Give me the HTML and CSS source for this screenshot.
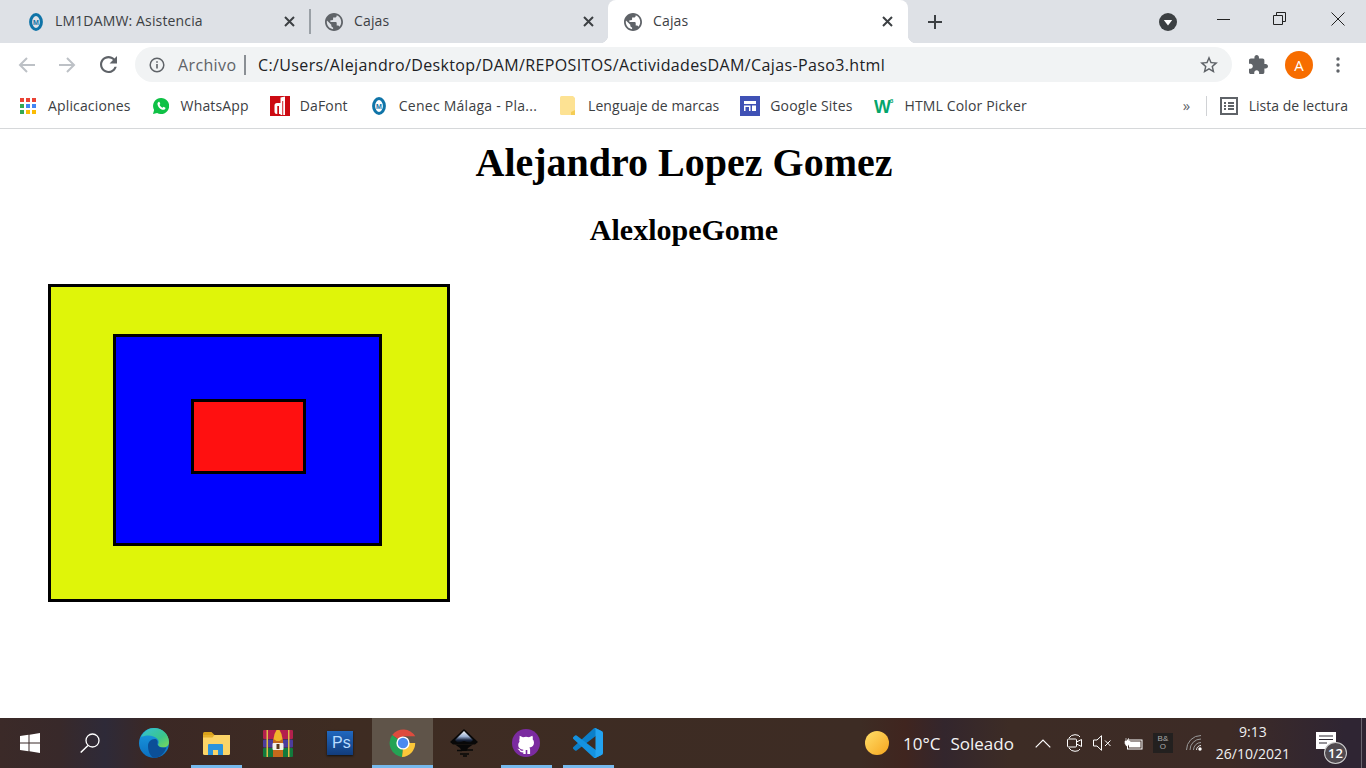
FILE: index.html
```html
<!DOCTYPE html>
<html lang="es">
<head>
  <meta charset="UTF-8">
  <title>Cajas</title>
  <link rel="stylesheet" href="styles.css">
</head>
<body>
  <svg class="defs" width="0" height="0">
    <symbol id="globe" viewBox="2 2 20 20"><path d="M12 2C6.48 2 2 6.48 2 12s4.48 10 10 10 10-4.48 10-10S17.52 2 12 2zm-1 17.93c-3.95-.49-7-3.85-7-7.93 0-.62.08-1.21.21-1.79L9 15v1c0 1.1.9 2 2 2v1.93zm6.9-2.54c-.26-.81-1-1.39-1.9-1.39h-1v-3c0-.55-.45-1-1-1H8v-2h2c.55 0 1-.45 1-1V7h2c1.1 0 2-.9 2-2v-.41c2.93 1.19 5 4.06 5 7.41 0 2.08-.8 3.97-2.1 5.39z"/></symbol>
    <symbol id="cross" viewBox="0 0 11 11"><path d="M1 1l9 9M10 1l-9 9" fill="none" stroke="currentColor" stroke-width="2"/></symbol>
  </svg>

  <header class="chrome">
    <div class="tabstrip">
      <div class="tab tab-first">
        <svg class="favicon narrow" viewBox="0 0 14 18"><ellipse cx="7" cy="9" rx="5.4" ry="7.4" fill="none" stroke="#0f74a8" stroke-width="3"/><text x="7" y="11.500" text-anchor="middle" font-size="7" font-weight="700" fill="#0f74a8" font-family="Liberation Sans, sans-serif">M</text></svg>
        <span class="tab-title">LM1DAMW: Asistencia</span>
        <svg class="tab-close"><use href="#cross"/></svg>
      </div>
      <span class="tab-sep"></span>
      <div class="tab tab-second">
        <svg class="favicon globe"><use href="#globe"/></svg>
        <span class="tab-title">Cajas</span>
        <svg class="tab-close"><use href="#cross"/></svg>
      </div>
      <div class="tab tab-active">
        <svg class="favicon globe"><use href="#globe"/></svg>
        <span class="tab-title">Cajas</span>
        <svg class="tab-close"><use href="#cross"/></svg>
      </div>
      <svg class="new-tab" viewBox="0 0 16 16"><path d="M8 1v14M1 8h14" fill="none" stroke="#3c4043" stroke-width="2"/></svg>
      <svg class="tab-search" viewBox="0 0 18 18"><circle cx="9" cy="9" r="9" fill="#3c4043"/><path d="M4.8 7h8.4L9 12.6z" fill="#fff"/></svg>
      <div class="window-btns">
        <svg viewBox="0 0 14 14"><path d="M0 7.5h13" stroke="#222" fill="none"/></svg>
        <svg viewBox="0 0 14 14"><path d="M.5 3.5h9v9h-9zM3.5 3.5v-3h9v9h-3" stroke="#222" fill="none"/></svg>
        <svg viewBox="0 0 14 14"><path d="M.5.5l13 13M13.5.5l-13 13" stroke="#222" fill="none"/></svg>
      </div>
    </div>

    <div class="toolbar">
      <svg class="nav-icon" viewBox="0 0 18 18"><path d="M17 9H2M9 2L2 9l7 7" fill="none" stroke="#bdc1c6" stroke-width="2"/></svg>
      <svg class="nav-icon forward" viewBox="0 0 18 18"><path d="M1 9h15M9 2l7 7-7 7" fill="none" stroke="#bdc1c6" stroke-width="2"/></svg>
      <svg class="nav-icon reload" viewBox="4 4 16 16"><path d="M17.65 6.35C16.2 4.9 14.21 4 12 4c-4.42 0-7.99 3.58-7.99 8s3.57 8 7.99 8c3.73 0 6.84-2.55 7.73-6h-2.08c-.82 2.33-3.04 4-5.65 4-3.31 0-6-2.69-6-6s2.69-6 6-6c1.66 0 3.14.69 4.22 1.78L13 11h7V4l-2.35 2.35z" fill="#5f6368"/></svg>
      <div class="omnibox">
        <svg class="info" viewBox="0 0 16 16"><circle cx="8" cy="8" r="6.8" fill="none" stroke="#5f6368" stroke-width="1.5"/><path d="M7.2 7h1.6v4.6H7.2zM7.2 4.2h1.6v1.6H7.2z" fill="#5f6368"/></svg>
        <span class="scheme">Archivo</span>
        <span class="omni-sep"></span>
        <span class="url">C:/Users/Alejandro/Desktop/DAM/REPOSITOS/ActividadesDAM/Cajas-Paso3.html</span>
        <svg class="star" viewBox="2 2 20 19"><path d="M22 9.24l-7.19-.62L12 2 9.19 8.63 2 9.24l5.46 4.73L5.82 21 12 17.27 18.18 21l-1.63-7.03L22 9.24zM12 15.4l-3.76 2.27 1-4.28-3.32-2.88 4.38-.38L12 6.1l1.71 4.04 4.38.38-3.32 2.88 1 4.28L12 15.4z" fill="#5f6368"/></svg>
      </div>
      <svg class="puzzle" viewBox="2 1 21 21"><path d="M20.5 11H19V7c0-1.1-.9-2-2-2h-4V3.5C13 2.12 11.88 1 10.5 1S8 2.12 8 3.5V5H4c-1.1 0-1.99.9-1.99 2v3.8H3.5c1.49 0 2.7 1.21 2.7 2.7s-1.21 2.7-2.7 2.7H2V20c0 1.1.9 2 2 2h3.8v-1.5c0-1.49 1.21-2.7 2.7-2.7 1.49 0 2.7 1.21 2.7 2.7V22H17c1.1 0 2-.9 2-2v-4h1.5c1.38 0 2.5-1.12 2.5-2.5S21.88 11 20.5 11z" fill="#5f6368"/></svg>
      <span class="avatar">A</span>
      <svg class="kebab" viewBox="0 0 4 16"><circle cx="2" cy="2" r="1.7"/><circle cx="2" cy="8" r="1.7"/><circle cx="2" cy="14" r="1.7"/></svg>
    </div>

    <div class="bookmarks">
      <a class="bm bm-apps">
        <svg class="bm-icon" viewBox="0 0 16 16">
          <rect x="0" y="0" width="4" height="4" fill="#ea4335"/><rect x="6" y="0" width="4" height="4" fill="#ea4335"/><rect x="12" y="0" width="4" height="4" fill="#ea4335"/>
          <rect x="0" y="6" width="4" height="4" fill="#34a853"/><rect x="6" y="6" width="4" height="4" fill="#4285f4"/><rect x="12" y="6" width="4" height="4" fill="#4285f4"/>
          <rect x="0" y="12" width="4" height="4" fill="#34a853"/><rect x="6" y="12" width="4" height="4" fill="#fbbc05"/><rect x="12" y="12" width="4" height="4" fill="#fbbc05"/>
        </svg>
        <span>Aplicaciones</span>
      </a>
      <a class="bm bm-whatsapp">
        <svg class="bm-icon" viewBox="0 0 16 16"><path d="M8 0a8 8 0 0 0-6.9 12L0 16l4.1-1.1A8 8 0 1 0 8 0z" fill="#0fc146"/><path d="M5.6 3.9c-.7.4-1.3 1.200-1.100 2.300.4 2.700 3 5.300 5.600 5.600 1.100.1 2-.5 2.300-1.300.1-.4.100-.7 0-.8l-1.900-.9-.9 1c-1.400-.5-2.500-1.600-3.100-3l.8-.9-.8-1.900c-.2-.2-.6-.2-.9-.1z" fill="#fff"/></svg>
        <span>WhatsApp</span>
      </a>
      <a class="bm bm-dafont">
        <svg class="bm-icon wide" viewBox="0 0 20 20"><rect width="20" height="20" fill="#cc0a12"/><path d="M4.500 9.500Q4.500 7 7 7h3.500V1.500l4.500-1V19h-4.500v-1H7q-2.500 0-2.500-2.500z" fill="#fff"/><path d="M7.300 10h1.700v8H7.300zM12.300 5h.9v14h-.9z" fill="#cc0a12"/></svg>
        <span>DaFont</span>
      </a>
      <a class="bm bm-cenec">
        <svg class="bm-icon narrow" viewBox="0 0 14 18"><ellipse cx="7" cy="9" rx="5.4" ry="7.4" fill="none" stroke="#0f74a8" stroke-width="3"/><text x="7" y="11.500" text-anchor="middle" font-size="7" font-weight="700" fill="#0f74a8" font-family="Liberation Sans, sans-serif">M</text></svg>
        <span>Cenec Málaga - Pla...</span>
      </a>
      <a class="bm bm-folder">
        <svg class="bm-icon" viewBox="0 0 16 20"><path d="M0 1.500Q0 0 1.500 0h11.500l2 2v14l-1.500 3H1.500Q0 19 0 17.500z" fill="#fde293"/><path d="M15 14v5h-4v-3z" fill="#f5cd55"/></svg>
        <span>Lenguaje de marcas</span>
      </a>
      <a class="bm bm-sites">
        <svg class="bm-icon wide" viewBox="0 0 20 20"><rect width="20" height="20" fill="#3f51b5"/><path d="M4 5h12v3H4zM4 9.500h6.500V15H4zM12 9.500h4V15h-4z" fill="#fff"/><path d="M5.500 11h3.500v4H5.500z" fill="#3f51b5"/></svg>
        <span>Google Sites</span>
      </a>
      <a class="bm bm-w3">
        <svg class="bm-icon wide" viewBox="0 0 20 20"><text x="0" y="17" font-size="19" font-weight="700" fill="#04a56b" font-family="Liberation Sans, sans-serif" textLength="17" lengthAdjust="spacingAndGlyphs">W</text><text x="16" y="7" font-size="6" font-weight="700" fill="#04a56b" font-family="Liberation Sans, sans-serif">3</text></svg>
        <span>HTML Color Picker</span>
      </a>
      <span class="bm-more">»</span>
      <span class="bm-sep"></span>
      <a class="bm bm-reading">
        <svg class="bm-icon" viewBox="0 0 18 18"><rect x="1" y="1" width="16" height="16" fill="none" stroke="#5f6368" stroke-width="2"/><path d="M4 5h2v2H4zM8 5h6v2H8zM4 8h2v2H4zM8 8h6v2H8zM4 11h2v2H4zM8 11h6v2H8z" fill="#5f6368"/></svg>
        <span>Lista de lectura</span>
      </a>
    </div>
  </header>

  <main class="page">
    <h1>Alejandro Lopez Gomez</h1>
    <h2>AlexlopeGome</h2>
    <div class="caja-amarilla">
      <div class="caja-azul">
        <div class="caja-roja"></div>
      </div>
    </div>
  </main>

  <footer class="taskbar">
    <svg class="start" viewBox="0 0 20 20"><path d="M0 3l8.500-1.200v7.700H0zM9.500 1.700L20 0v9.500H9.500zM0 10.500h8.500v7.700L0 17zM9.500 10.500H20V20L9.500 18.300z" fill="#fff"/></svg>
    <svg class="search" viewBox="0 0 20 20"><circle cx="12.500" cy="7.500" r="6.500" fill="none" stroke="#fff" stroke-width="1.300"/><path d="M8 12.500L.7 19.500" stroke="#fff" stroke-width="1.500"/></svg>

    <div class="apps">
      <div class="app">
        <svg class="app-icon" viewBox="0 0 30 30">
          <defs>
            <linearGradient id="edgeA" x1="0" y1="0" x2="1" y2="1"><stop offset="0" stop-color="#35c1d8"/><stop offset=".6" stop-color="#3bc58a"/><stop offset="1" stop-color="#7ed957"/></linearGradient>
            <linearGradient id="edgeB" x1="0" y1="0" x2="0" y2="1"><stop offset="0" stop-color="#1b9de2"/><stop offset="1" stop-color="#0c6fc0"/></linearGradient>
          </defs>
          <circle cx="15" cy="15" r="15" fill="url(#edgeB)"/>
          <path d="M2 9C5 3 10 0 15 0c8 0 15 6 15 14 0 3-2 5.500-6 5.500-2.500 0-5-1-5-3 1.200-1.500.8-4-.5-5.500C16 8.500 12 7 8 7.500 5.500 7.800 3.500 8.500 2 9z" fill="url(#edgeA)"/>
          <path d="M9 18c0-4 3-7 6.500-7 2.500 0 3.800 2 3 4.500-.3 2.500 2.500 4 5.500 4h3.500C25 26 20 30 15 30 12 29 9 24 9 18z" fill="#0b4f97"/>
        </svg>
      </div>
      <div class="app app-open">
        <svg class="explorer-icon" viewBox="0 0 27 23"><path d="M0 1.500Q0 0 1.500 0h7l3 3 -1 2H0z" fill="#d9a21b"/><path d="M0 3h27v18.500q0 1.500-1.500 1.500h-24Q0 23 0 21.500z" fill="#fbd467"/><path d="M0 3h11.500l-2 2.500H0z" fill="#e5b02c"/><path d="M5 23V13q0-1 1-1h13q1 0 1 1v10h-5v-5h-5v5z" fill="#2b93dc"/></svg>
      </div>
      <div class="app">
        <svg class="rar-icon" viewBox="0 0 30 27">
          <rect y="0" width="30" height="9" rx="1" fill="#b3204d"/><rect y="9.500" width="30" height="8" rx="1" fill="#4c3c9c"/><rect y="18" width="30" height="9" rx="1" fill="#127a3c"/>
          <path d="M3.500 0h1.500v27H3.500zM25 0h1.500v27H25z" fill="#e0bc48"/>
          <rect x="10" y="9" width="10" height="18" fill="#c4691c"/>
          <path d="M11.500 4l2-4h3l2 4 1 5-3 2h-3l-3-2z" fill="#f0b52a"/>
          <rect x="9.500" y="13" width="11" height="7" rx="1" fill="#f4f1e8"/>
          <rect x="13.500" y="14" width="3" height="5" fill="#5a3a1a"/>
        </svg>
      </div>
      <div class="app">
        <div class="ps-icon">Ps</div>
      </div>
      <div class="app app-open app-active">
        <svg class="app-icon-sm" viewBox="0 0 28 28"><path d="M14 14L3.200 6A14 14 0 0 1 26.200 7.200H14z" fill="#dd4b3e"/><path d="M14 14H26.200A14 14 0 0 1 13 28z" fill="#fbc739"/><path d="M14 14L13 28A14 14 0 0 1 3.200 6z" fill="#24a354"/><circle cx="14" cy="14" r="6.600" fill="#fff"/><circle cx="14" cy="14" r="5.200" fill="#4a89ee"/></svg>
      </div>
      <div class="app">
        <svg class="app-icon-sm" viewBox="0 0 28 28">
          <defs><linearGradient id="inkBody" x1="0" y1="0" x2="0" y2="1"><stop offset="0" stop-color="#f4f4f4"/><stop offset=".45" stop-color="#9fb4d6"/><stop offset=".75" stop-color="#1d2a44"/><stop offset="1" stop-color="#050505"/></linearGradient></defs>
          <path d="M14 0L28 13l-3 2.500H3L0 13z" fill="#080808"/>
          <path d="M14 2l9 9-3 3-6-2-6 2-3-3z" fill="url(#inkBody)"/>
          <path d="M5 15.500h18l-5 3.500-1.500 3h-5L10 19z" fill="#080808"/>
          <path d="M7 21.500h5M16 21h7M10 25h9M13 27h4" stroke="#080808" stroke-width="1.300"/>
        </svg>
      </div>
      <div class="app app-open">
        <svg class="app-icon-sm" viewBox="0 0 28 28"><circle cx="14" cy="14" r="14" fill="#7b2ba0"/><path d="M7.600 6.800l3.400 1.400q3-.7 6 0l3.400-1.400q.8 2 .3 3.500 1.300 1.500 1.300 3.400 0 4-4.600 4.700.7.800.7 2v4.500h-2.800v-3.800h-1.600v3.800h-2.400v-1.600q-3.300.6-4.300-2.300l-1.700-1.300 2.300.4 1.200 1.400q1.100.6 2.500.1v-.9q-5-.5-5.100-4.800 0-1.900 1.300-3.200-.6-1.500.1-3.500z" fill="#fff"/></svg>
      </div>
      <div class="app app-open">
        <svg class="app-icon" viewBox="0 0 100 100"><path d="M96.460 10.800L75.860.870a6.230 6.230 0 0 0-7.100 1.200L1.300 63.600a4.160 4.160 0 0 0 0 6.160l5.500 5a4.170 4.170 0 0 0 5.330.24L93.400 13.300c2.730-2.070 6.600-.13 6.600 3.300v-.24c0-2.400-1.380-4.600-3.540-5.560z" fill="#0b7fc9"/><path d="M96.460 89.200L75.860 99.130a6.230 6.230 0 0 1-7.100-1.200L1.300 36.400a4.160 4.160 0 0 1 0-6.160l5.500-5a4.170 4.170 0 0 1 5.330-.24L93.400 86.700c2.730 2.070 6.600.13 6.600-3.300v.24c0 2.400-1.380 4.600-3.540 5.560z" fill="#1492e0"/><path d="M75.860 99.130a6.230 6.230 0 0 1-7.100-1.200c2.300 2.300 6.240.67 6.240-2.600V4.670c0-3.270-3.940-4.900-6.240-2.600a6.230 6.230 0 0 1 7.100-1.200L96.460 10.800A6.250 6.250 0 0 1 100 16.440v67.120a6.250 6.250 0 0 1-3.540 5.640z" fill="#23a3f0"/></svg>
      </div>
    </div>

    <div class="weather">
      <span class="sun"></span>
      <span class="temp">10°C</span>
      <span class="sky">Soleado</span>
    </div>

    <div class="tray">
      <svg class="tray-chevron" viewBox="0 0 16 9"><path d="M.7 8.300L8 1l7.300 7.300" fill="none" stroke="#fff" stroke-width="1.200"/></svg>
      <svg class="tray-meet" viewBox="0 0 15 18"><path d="M2 4Q4 .7 8 .7T13 3M2 14Q4 17.300 8 17.300T13 15" fill="none" stroke="#fff"/><rect x=".5" y="5" width="9" height="8" rx="1" fill="none" stroke="#fff"/><path d="M9.500 8l5-2.500v7l-5-2.500" fill="none" stroke="#fff"/></svg>
      <svg class="tray-volume" viewBox="0 0 19 16"><path d="M.5 5h3.500L8.500.7v14.600L4 11H.5z" fill="none" stroke="#fff"/><path d="M12 5.500l5.500 5.500M17.500 5.500L12 11" fill="none" stroke="#fff"/></svg>
      <svg class="tray-battery" viewBox="0 0 20 13"><path d="M3 1v3M5.500 1v3M2 4h5v2.500L4.500 9H3.500L2 6.500z" fill="#fff" stroke="#fff" stroke-width=".6"/><rect x="4.500" y="3" width="14.500" height="9" fill="none" stroke="#fff"/><rect x="6" y="4.500" width="11.500" height="6" fill="#fff"/></svg>
      <div class="tray-bo">B&amp;<br>O</div>
      <svg class="tray-wifi" viewBox="0 0 16 16"><path d="M.5 15A14.500 14.500 0 0 1 15 .5M4 15A11 11 0 0 1 15 4M7.500 15A7.500 7.500 0 0 1 15 7.500" fill="none" stroke="#9a9a9a"/><path d="M10.500 15A4.500 4.500 0 0 1 15 10.500" fill="none" stroke="#ddd"/><circle cx="14" cy="14" r="1.700" fill="#fff"/></svg>
      <div class="clock"><span>9:13</span><span>26/10/2021</span></div>
      <div class="notif">
        <svg class="notif-icon" viewBox="0 0 20 17"><path d="M0 0h20v17H0z" fill="#fff"/><path d="M3 4h14M3 7.500h14M3 11h8" stroke="#2d2833" stroke-width="1.200"/></svg>
        <span class="notif-badge">12</span>
      </div>
    </div>
    <span class="show-desktop"></span>
  </footer>
</body>
</html>
```

FILE: styles.css
```css
* {
  box-sizing: border-box;
}
html, body {
  margin: 0;
  height: 100%;
}
body {
  display: flex;
  flex-direction: column;
  height: 768px;
  overflow: hidden;
  background: white;
  font-family: "Open Sans", "Liberation Sans", sans-serif;
}
svg {
  display: block;
  flex: none;
}
.defs {
  position: absolute;
}

/* browser frame */
.tabstrip {
  display: flex;
  align-items: center;
  height: 43px;
  padding-left: 11px;
  background: #dee1e6;
  color: #3c4043;
}
.tab {
  display: flex;
  align-items: center;
  width: 298px;
  height: 43px;
  padding: 0 14px 0 16px;
  font-size: 14px;
  letter-spacing: 0.15px;
  position: relative;
}
.tab-second {
  width: 297px;
  padding-left: 14px;
}
.tab-active {
  width: 300px;
  padding: 0 15px 0 16px;
  background: white;
  border-radius: 8px 8px 0 0;
}
.tab-active::before,
.tab-active::after {
  content: "";
  position: absolute;
  bottom: 0;
  width: 8px;
  height: 8px;
}
.tab-active::before {
  left: -8px;
  background: radial-gradient(circle at 0 0, #dee1e6 8px, white 8.5px);
}
.tab-active::after {
  right: -8px;
  background: radial-gradient(circle at 100% 0, #dee1e6 8px, white 8.5px);
}
.tab-sep {
  width: 2px;
  height: 25px;
  background: #9aa0a6;
  flex: none;
}
.favicon {
  width: 18px;
  height: 18px;
  margin-right: 11px;
}
.favicon.narrow {
  margin: 0 12px 0 2px;
  width: 14px;
  height: 18px;
}
.favicon.globe {
  fill: #5f6368;
  margin-left: 0;
}
.tab-title {
  flex: 1;
  padding-bottom: 2px;
  white-space: nowrap;
}
.tab-close {
  width: 11px;
  height: 11px;
  color: #3c4043;
}
.new-tab {
  width: 16px;
  height: 16px;
  margin-left: 19px;
}
.tab-search {
  width: 18px;
  height: 18px;
  margin-left: 216px;
}
.window-btns {
  display: flex;
  gap: 42px;
  margin-left: 40px;
  margin-top: -6px;
}
.window-btns svg {
  width: 14px;
  height: 14px;
}
.window-btns svg:last-child {
  margin-left: 2px;
}
.toolbar {
  display: flex;
  align-items: center;
  height: 43px;
  padding-left: 18px;
  background: white;
}
.nav-icon {
  width: 18px;
  height: 18px;
  margin-right: 22px;
}
.nav-icon.forward {
  margin-right: 24px;
}
.nav-icon.reload {
  width: 17px;
  height: 17px;
  margin-right: 18px;
}
.omnibox {
  display: flex;
  align-items: center;
  width: 1097px;
  height: 35px;
  padding: 0 14px;
  border-radius: 18px;
  background: #f1f3f4;
  color: #202124;
  font-size: 16px;
  letter-spacing: 0.37px;
  white-space: nowrap;
}
.info {
  width: 16px;
  height: 16px;
}
.scheme {
  margin-left: 13px;
  padding-top: 1px;
  color: #5f6368;
  width: 59px;
}
.omni-sep {
  width: 2px;
  height: 20px;
  margin: 0 12px 0 7px;
  background: #8a8f94;
}
.url {
  flex: 1;
  padding-top: 1px;
}
.star {
  width: 18px;
  height: 17px;
}
.puzzle {
  width: 19px;
  height: 19px;
  margin-left: 17px;
}
.avatar {
  flex: none;
  display: flex;
  align-items: center;
  justify-content: center;
  width: 28px;
  height: 28px;
  margin-left: 17px;
  border-radius: 50%;
  background: #f76d00;
  color: white;
  font-size: 15px;
}
.kebab {
  width: 4px;
  height: 16px;
  margin-left: 23px;
  fill: #5f6368;
}
.bookmarks {
  display: flex;
  align-items: center;
  height: 43px;
  padding: 0 0 2px 20px;
  border-bottom: 1px solid #d6d8da;
  font-size: 14px;
  letter-spacing: 0.15px;
  color: #3c4043;
}
.bm {
  display: flex;
  align-items: center;
  gap: 12px;
  white-space: nowrap;
  flex: none;
}
.bm span {
  padding-bottom: 2px;
}
.bm-icon {
  width: 16px;
  height: 16px;
}
.bm-icon.wide {
  width: 20px;
  height: 20px;
}
.bm-icon.narrow {
  width: 14px;
  height: 18px;
}
.bm-folder .bm-icon {
  height: 20px;
}
.bm-whatsapp { margin-left: 22px; }
.bm-dafont { margin-left: 21px; gap: 10px; }
.bm-cenec { margin-left: 24px; gap: 13px; letter-spacing: 0.25px; }
.bm-folder { margin-left: 23px; letter-spacing: 0.04px; }
.bm-sites { margin-left: 21px; gap: 10px; }
.bm-w3 { margin-left: 22px; gap: 10px; }
.bm-more {
  margin-left: 156px;
  padding-bottom: 2px;
  width: 10px;
  font-size: 15px;
  color: #5f6368;
}
.bm-sep {
  width: 1px;
  height: 20px;
  margin: 0 13px 0 13px;
  background: #d0d2d5;
}
.bm-reading { gap: 11px; letter-spacing: 0; }
.bm-reading .bm-icon {
  width: 18px;
  height: 18px;
}

/* page content */
.page {
  flex: 1;
  font-family: "Liberation Serif", serif;
  color: black;
  text-align: center;
}
.page h1 {
  margin: 11px 0 0;
  padding-left: 2px;
  font-size: 40px;
  line-height: 46px;
}
.page h2 {
  margin: 26px 0 0;
  padding-left: 2px;
  font-size: 30px;
  line-height: 35px;
}
.caja-amarilla {
  width: 402px;
  height: 318px;
  margin: 37px 0 0 48px;
  padding: 47px 0 0 62px;
  border: 3px solid black;
  background: #dff509;
}
.caja-azul {
  width: 269px;
  height: 212px;
  padding: 62px 0 0 75px;
  border: 3px solid black;
  background: #0000ff;
}
.caja-roja {
  width: 115px;
  height: 75px;
  border: 3px solid black;
  background: #ff1010;
}

/* windows taskbar */
.taskbar {
  display: flex;
  align-items: center;
  flex: none;
  height: 50px;
  color: white;
  background: linear-gradient(90deg, #3b2a28 0, #38292a 60px, #2e2a38 105px, #3b2825 150px, #3e2c22 340px, #3d2c24 860px, #40251f 905px, #33262d 945px, #3d2c25 1010px, #3d2b26 1230px, #2f2533 1345px);
}
.start {
  width: 20px;
  height: 20px;
  margin-left: 20px;
}
.search {
  width: 20px;
  height: 20px;
  margin-left: 40px;
}
.apps {
  display: flex;
  height: 50px;
  margin-left: 23px;
}
.app {
  display: flex;
  align-items: center;
  justify-content: center;
  width: 62px;
  height: 50px;
  position: relative;
}
.app-open::after {
  content: "";
  position: absolute;
  left: 6px;
  right: 5px;
  bottom: 0;
  height: 3px;
  background: #76b9ed;
}
.app-active {
  width: 61px;
  margin-left: 1px;
  background: #5f5449;
}
.app-active::after {
  left: 0;
  right: 0;
}
.app-icon {
  width: 30px;
  height: 30px;
}
.app-icon-sm {
  width: 28px;
  height: 28px;
}
.explorer-icon {
  width: 27px;
  height: 23px;
}
.rar-icon {
  width: 30px;
  height: 27px;
}
.ps-icon {
  width: 26px;
  height: 24px;
  padding-left: 5px;
  background: linear-gradient(#2068bf, #123c7c);
  box-shadow: 0 1px 2px #111;
  color: #b9dcff;
  font-family: "Liberation Sans", sans-serif;
  font-size: 16px;
  line-height: 23px;
}
.weather {
  display: flex;
  align-items: center;
  margin-left: 246px;
  font-size: 17px;
  color: #f4f4f4;
}
.sun {
  width: 24px;
  height: 24px;
  border-radius: 50%;
  background: linear-gradient(135deg, #ffdf6a, #f6a51e);
}
.temp {
  margin-left: 14px;
}
.sky {
  margin-left: 10px;
}
.tray {
  display: flex;
  align-items: center;
}
.tray-chevron {
  width: 16px;
  height: 9px;
  margin-left: 21px;
}
.tray-meet {
  width: 15px;
  height: 18px;
  margin-left: 16px;
}
.tray-volume {
  width: 19px;
  height: 16px;
  margin-left: 11px;
}
.tray-battery {
  width: 20px;
  height: 13px;
  margin-left: 11px;
}
.tray-bo {
  width: 20px;
  height: 20px;
  margin-left: 10px;
  padding-top: 2px;
  background: #23201f;
  color: #aaa;
  font-family: "Liberation Sans", sans-serif;
  font-size: 8px;
  line-height: 8px;
  text-align: center;
}
.tray-wifi {
  width: 16px;
  height: 16px;
  margin-left: 13px;
}
.clock {
  display: flex;
  flex-direction: column;
  align-items: center;
  width: 76px;
  margin-left: 13px;
  font-size: 14px;
  line-height: 22px;
  color: #f0f0f0;
}
.notif {
  width: 31px;
  height: 32px;
  margin: 10px 0 0 25px;
  position: relative;
}
.notif-icon {
  width: 20px;
  height: 17px;
}
.notif-badge {
  position: absolute;
  right: 0;
  bottom: 0;
  width: 23px;
  height: 22px;
  border: 1px solid #cfcfcf;
  border-radius: 50%;
  background: #504a50;
  font-size: 13px;
  font-weight: 600;
  line-height: 20px;
  text-align: center;
}
.show-desktop {
  width: 1px;
  height: 50px;
  margin-left: 14px;
  background: #6b6670;
}
```
